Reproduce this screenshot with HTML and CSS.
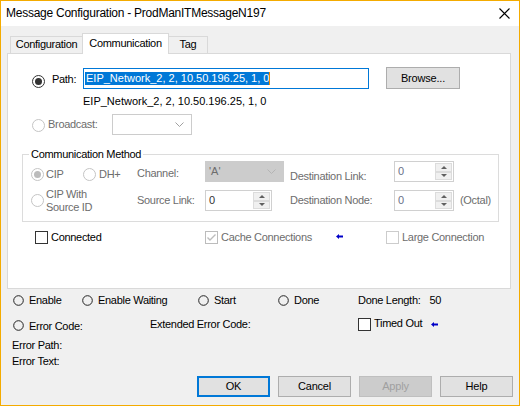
FILE: index.html
```html
<!DOCTYPE html>
<html>
<head>
<meta charset="utf-8">
<link rel="stylesheet" href="styles.css">
</head>
<body>
<div class="window">
  <div class="titlebar">
    <span class="title">Message Configuration - ProdManITMessageN197</span>
    <svg class="close" width="11" height="11" viewBox="0 0 11 11"><path d="M0.5 0.5 L10.5 10.5 M10.5 0.5 L0.5 10.5" stroke="#000" stroke-width="1.1" fill="none"/></svg>
  </div>
  <div class="tabs">
    <div class="tab tab-config">Configuration</div>
    <div class="tab tab-active">Communication</div>
    <div class="tab tab-tag">Tag</div>
  </div>
  <div class="panel">
    <div class="row-path">
      <svg class="radio" width="13" height="13" viewBox="0 0 13 13"><circle cx="6.5" cy="6.5" r="6" fill="#fff" stroke="#333"/><circle cx="6.5" cy="6.5" r="3.5" fill="#333"/></svg>
      <span class="lbl-path">Path:</span>
      <div class="textbox"><span class="sel">EIP_Network_2, 2, 10.50.196.25, 1, 0</span><span class="caret"></span></div>
      <div class="btn btn-browse">Browse...</div>
    </div>
    <div class="path-text">EIP_Network_2, 2, 10.50.196.25, 1, 0</div>
    <div class="row-broadcast">
      <svg class="radio radio-b" width="13" height="13" viewBox="0 0 13 13"><circle cx="6.5" cy="6.5" r="6" fill="#fff" stroke="#c4c4c4"/></svg>
      <span class="lbl-broadcast dis">Broadcast:</span>
      <div class="combo combo-b">
        <svg class="chev" width="9" height="5" viewBox="0 0 9 5"><polyline points="0.5,0.5 4.5,4.5 8.5,0.5" fill="none" stroke="#a0a0a0"/></svg>
      </div>
    </div>
    <fieldset class="group">
      <legend>Communication Method</legend>
      <div class="ggrid">
        <svg class="radio g-r1" width="13" height="13" viewBox="0 0 13 13"><circle cx="6.5" cy="6.5" r="6" fill="#fff" stroke="#c4c4c4"/><circle cx="6.5" cy="6.5" r="3.5" fill="#bcbcbc"/></svg>
        <span class="dis g-t1">CIP</span>
        <svg class="radio g-r1" width="13" height="13" viewBox="0 0 13 13"><circle cx="6.5" cy="6.5" r="6" fill="#fff" stroke="#c4c4c4"/></svg>
        <span class="dis g-t1">DH+</span>
        <span class="dis g-chan">Channel:</span>
        <div class="combo combo-c"><span class="combo-val">'A'</span>
          <svg class="chev" width="9" height="5" viewBox="0 0 9 5"><polyline points="0.5,0.5 4.5,4.5 8.5,0.5" fill="none" stroke="#b4b4b4"/></svg>
        </div>
        <span class="dis g-dl">Destination Link:</span>
        <div class="spinner sp-w60"><span class="sp-val blueish">0</span><div class="spin"><div class="sb"><i class="up"></i></div><div class="sb"><i class="dn"></i></div></div></div>
        <span class="g-empty"></span>

        <svg class="radio g-r2" width="13" height="13" viewBox="0 0 13 13"><circle cx="6.5" cy="6.5" r="6" fill="#fff" stroke="#c4c4c4"/></svg>
        <span class="dis g-cipw">CIP With<br>Source ID</span>
        <span class="dis g-l2">Source Link:</span>
        <div class="spinner sp-w67 g-sp2"><span class="sp-val">0</span><div class="spin"><div class="sb"><i class="up"></i></div><div class="sb"><i class="dn"></i></div></div></div>
        <span class="dis g-l2">Destination Node:</span>
        <div class="spinner sp-w60 g-sp2"><span class="sp-val blueish">0</span><div class="spin"><div class="sb"><i class="up"></i></div><div class="sb"><i class="dn"></i></div></div></div>
        <span class="dis g-l2">(Octal)</span>
      </div>
    </fieldset>
    <div class="row-checks">
      <div class="chk-cell"><span class="chk"></span><span class="chk-lbl">Connected</span></div>
      <div class="chk-cell"><span class="chk chk-dis"><svg width="11" height="11" viewBox="0 0 11 11"><polyline points="1.5,5.5 4,8 9.5,2.5" fill="none" stroke="#bcbcbc" stroke-width="1.4"/></svg></span><span class="chk-lbl dis">Cache Connections</span></div>
      <div class="arrow-cell"><svg class="arrow" width="7" height="5" viewBox="0 0 7 5"><path d="M0 2.5 L3 0 L3 1.5 L7 1.5 L7 3.5 L3 3.5 L3 5 Z" fill="#0000c8"/></svg></div>
      <div class="chk-cell"><span class="chk chk-dis2"></span><span class="chk-lbl dis">Large Connection</span></div>
    </div>
  </div>
  <div class="status">
    <div class="srow1">
      <div class="led-item"><svg class="led" width="11" height="11" viewBox="0 0 11 11"><circle cx="5.5" cy="5.5" r="4.8" fill="#f0f0f0" stroke="#222"/></svg><span>Enable</span></div>
      <div class="led-item"><svg class="led" width="11" height="11" viewBox="0 0 11 11"><circle cx="5.5" cy="5.5" r="4.8" fill="#f0f0f0" stroke="#222"/></svg><span>Enable Waiting</span></div>
      <div class="led-item"><svg class="led" width="11" height="11" viewBox="0 0 11 11"><circle cx="5.5" cy="5.5" r="4.8" fill="#f0f0f0" stroke="#222"/></svg><span>Start</span></div>
      <div class="led-item"><svg class="led" width="11" height="11" viewBox="0 0 11 11"><circle cx="5.5" cy="5.5" r="4.8" fill="#f0f0f0" stroke="#222"/></svg><span>Done</span></div>
      <div class="done-len">Done Length:<span class="done-val">50</span></div>
    </div>
    <div class="srow2">
      <div class="led-item ec"><svg class="led" width="11" height="11" viewBox="0 0 11 11"><circle cx="5.5" cy="5.5" r="4.8" fill="#f0f0f0" stroke="#222"/></svg><span>Error Code:</span></div>
      <div class="ext">Extended Error Code:</div>
      <div class="timed"><span class="chk"></span><span class="chk-lbl">Timed Out</span><svg class="arrow arrow2" width="7" height="5" viewBox="0 0 7 5"><path d="M0 2.5 L3 0 L3 1.5 L7 1.5 L7 3.5 L3 3.5 L3 5 Z" fill="#0000c8"/></svg></div>
    </div>
    <div class="err">Error Path:</div>
    <div class="err">Error Text:</div>
  </div>
  <div class="buttons">
    <div class="btn btn-ok">OK</div>
    <div class="btn">Cancel</div>
    <div class="btn btn-dis">Apply</div>
    <div class="btn">Help</div>
  </div>
</div>
</body>
</html>
```

FILE: styles.css
```css
html, body {
  margin: 0;
  padding: 0;
}
body {
  width: 520px;
  height: 406px;
  overflow: hidden;
  font-family: "Liberation Sans", Arial, sans-serif;
  font-size: 11px;
  line-height: 13px;
  letter-spacing: -0.3px;
  color: #000;
}
.window {
  box-sizing: border-box;
  width: 520px;
  height: 406px;
  border: 1px solid #f4ab00;
  background: #f0f0f0;
  display: flex;
  flex-direction: column;
}
.titlebar {
  flex: none;
  height: 25px;
  background: #fff;
  display: flex;
  align-items: center;
  justify-content: space-between;
  padding: 0 9px 0 5px;
}
.title {
  font-size: 12px;
  letter-spacing: -0.25px;
  line-height: 15px;
}
.close { display: block; }

.tabs {
  flex: none;
  height: 27px;
  display: flex;
  align-items: flex-end;
  padding-left: 9px;
}
.tab {
  box-sizing: border-box;
  height: 17px;
  border: 1px solid #d9d9d9;
  border-bottom: none;
  padding-top: 1px;
  text-align: center;
  background: #f0f0f0;
}
.tab-config { width: 72px; border-right: none; }
.tab-active {
  width: 87px;
  height: 21px;
  margin-bottom: -1px;
  padding-top: 3px;
  background: #fff;
  position: relative;
  z-index: 1;
}
.tab-tag { width: 39px; border-left: none; }

.panel {
  flex: none;
  box-sizing: border-box;
  margin-left: 6px;
  width: 504px;
  height: 236px;
  border: 1px solid #d9d9d9;
  background: #fff;
}
.dis { color: #6d6d6d; }
.radio { display: block; flex: none; }

.row-path {
  margin-top: 13px;
  padding-left: 24px;
  height: 22px;
  display: flex;
  align-items: flex-start;
}
.row-path .radio { margin-top: 8px; }
.lbl-path { margin-left: 7px; width: 31px; margin-top: 6px; flex: none; }
.textbox {
  box-sizing: border-box;
  flex: none;
  width: 286px;
  height: 21px;
  margin-top: 1px;
  border: 1px solid #0078d7;
  background: #fff;
  padding-left: 1px;
  display: flex;
  align-items: center;
}
.sel {
  background: #0078d7;
  color: #fff;
  letter-spacing: 0;
  padding-left: 1px;
  line-height: 13px;
}
.caret {
  width: 1px;
  height: 13px;
  background: #f08a00;
}
.btn {
  box-sizing: border-box;
  flex: none;
  width: 73px;
  height: 21px;
  border: 1px solid #adadad;
  background: #e1e1e1;
  display: flex;
  align-items: center;
  justify-content: center;
  letter-spacing: -0.2px;
}
.btn-browse { margin-left: 17px; width: 74px; height: 22px; }
.path-text {
  margin-top: 6px;
  padding-left: 75px;
  height: 13px;
  letter-spacing: 0;
}
.row-broadcast {
  margin-top: 6px;
  padding-left: 24px;
  height: 21px;
  display: flex;
  align-items: flex-start;
}
.radio-b { margin-top: 5px; }
.lbl-broadcast { margin-left: 3px; width: 64px; margin-top: 4px; flex: none; }
.combo {
  box-sizing: border-box;
  flex: none;
  height: 21px;
  display: flex;
  align-items: center;
  justify-content: space-between;
}
.combo-b {
  width: 80px;
  border: 1px solid #cccccc;
  background: #fff;
  justify-content: flex-end;
  padding-right: 7px;
}
.chev { display: block; }

.group {
  margin: 13px 0 0 14px;
  padding: 0 0 7px 0;
  width: 477px;
  box-sizing: border-box;
  border: 1px solid #dcdcdc;
  min-width: 0;
}
.group legend {
  margin-left: 6px;
  padding: 0 2px;
  line-height: 13px;
  color: #000;
}
.ggrid {
  display: grid;
  padding-left: 8px;
  grid-template-columns: 15px 37px 16px 38px 68px 85px 104px 66px auto;
  grid-template-rows: 27px 26px;
  align-items: start;
}
.g-r1 { margin-top: 7px; }
.g-t1 { margin-top: 7px; }
.g-chan { margin-top: 6px; }
.combo-c {
  width: 79px;
  background: #cccccc;
  border: 1px solid #cccccc;
  padding: 0 7px 0 3px;
}
.combo-val { color: #6d6d6d; letter-spacing: 0; }
.g-dl { margin-top: 9px; }
.g-r2 { margin-top: 6px; }
.g-cipw { grid-column: 2 / span 3; }
.g-l2 { margin-top: 6px; }
.g-sp2 { margin-top: 2px; }

.spinner {
  box-sizing: border-box;
  height: 21px;
  border: 1px solid #d0d0d0;
  background: #fff;
  display: flex;
  align-items: stretch;
}
.sp-w60 { width: 60px; }
.sp-w67 { width: 67px; }
.sp-val {
  flex: 1;
  padding-left: 3px;
  line-height: 19px;
  color: #333;
  letter-spacing: 0;
}
.sp-val.blueish { color: #6a7088; }
.spin {
  width: 17px;
  display: flex;
  flex-direction: column;
  padding: 1px 1px 1px 0;
  gap: 0;
}
.sb {
  flex: 1;
  box-sizing: border-box;
  border: 1px solid #dcdcdc;
  background: #f0f0f0;
  display: flex;
  align-items: center;
  justify-content: center;
}
.up {
  width: 0; height: 0;
  border-left: 3px solid transparent;
  border-right: 3px solid transparent;
  border-bottom: 3px solid #606060;
}
.dn {
  width: 0; height: 0;
  border-left: 3px solid transparent;
  border-right: 3px solid transparent;
  border-top: 3px solid #606060;
}

.row-checks {
  margin-top: 9px;
  padding-left: 27px;
  display: grid;
  grid-template-columns: 170px 131px 50px auto;
  height: 13px;
}
.chk-cell { display: flex; align-items: flex-start; }
.chk {
  box-sizing: border-box;
  flex: none;
  width: 13px;
  height: 13px;
  border: 1px solid #333;
  background: #fff;
  display: flex;
  align-items: center;
  justify-content: center;
}
.chk svg { display: block; }
.chk-dis { border-color: #bcbcbc; }
.chk-dis2 { border-color: #cccccc; }
.chk-lbl { margin-left: 3px; }
.arrow-cell { padding-top: 3px; }
.arrow { display: block; }

.status {
  flex: none;
  padding-left: 12px;
}
.srow1 {
  margin-top: 5px;
  height: 13px;
  display: grid;
  grid-template-columns: 69px 116px 80px 80px auto;
}
.led-item { display: flex; align-items: flex-start; gap: 5px; }
.led { display: block; flex: none; margin-top: 1px; }
.done-val { margin-left: 9px; }
.srow2 {
  margin-top: 10px;
  height: 14px;
  display: grid;
  grid-template-columns: 137px 208px auto;
}
.ec .led { margin-top: 3px; }
.ec span { margin-top: 3px; }
.ext { margin-top: 1px; }
.timed { display: flex; align-items: flex-start; }
.timed .chk { margin-top: 1px; }
.arrow2 { margin-left: 9px; margin-top: 5px; }
.err {
  height: 16px;
  line-height: 16px;
  padding-left: 0;
  margin-left: -1px;
}
.srow2 + .err { margin-top: 6px; }

.buttons {
  flex: none;
  margin-top: 7px;
  display: flex;
  justify-content: flex-end;
  gap: 8px;
  padding-right: 6px;
}
.btn-ok { border: 2px solid #0078d7; }
.btn-dis { background: #cccccc; border-color: #bfbfbf; color: #a0a0a0; }
```
